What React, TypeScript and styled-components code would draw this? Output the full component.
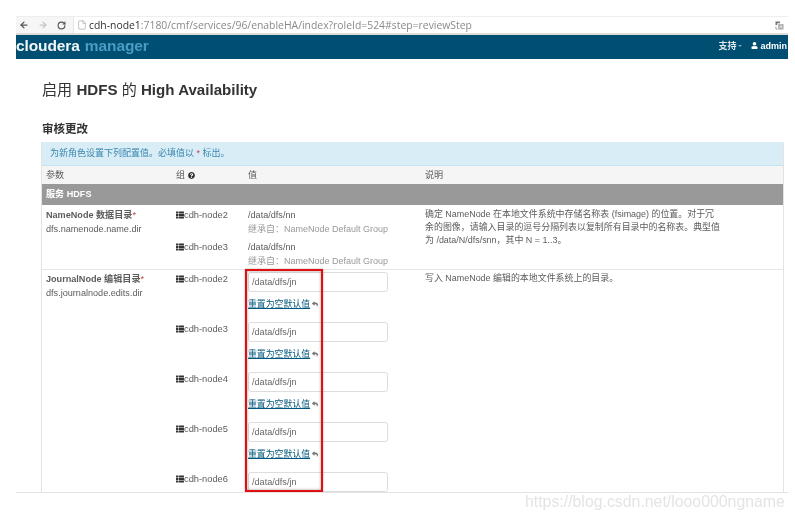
import React from 'react';
import styled, { createGlobalStyle } from 'styled-components';
import { ArrowLeft, ArrowRight, RotateCw, File } from 'lucide-react';
import { FaThList, FaUser, FaQuestionCircle, FaReply } from 'react-icons/fa';

const SANS = '"Liberation Sans", "Noto Sans CJK SC", sans-serif';

const GlobalStyle = createGlobalStyle`
  html, body {
    margin: 0;
    padding: 0;
    background: #fff;
    overflow: hidden;
  }
  * { box-sizing: border-box; }
`;

const defaultGroups = [
  { node: 'cdh-node2', value: '/data/dfs/nn' },
  { node: 'cdh-node3', value: '/data/dfs/nn' },
];
const journalNodes = ['cdh-node2', 'cdh-node3', 'cdh-node4', 'cdh-node5', 'cdh-node6'];

const App: React.FC = () => (
  <Page>
    <GlobalStyle />
    <Toolbar>
      <NavIcons>
        <ArrowLeft size={10} strokeWidth={3} color="#555" />
        <ArrowRight size={10} strokeWidth={3} color="#c4c4c4" />
        <RotateCw size={9} strokeWidth={3} color="#555" />
      </NavIcons>
      <Address>
        <File size={10} strokeWidth={1.4} color="#999" />
        <Url><Host>cdh-node1</Host>:7180/cmf/services/96/enableHA/index?roleId=524#step=reviewStep</Url>
        <Translate viewBox="0 0 10 10">
          <path d="M0.5 0.5h5v2h-3v2h-2z" fill="#777" />
          <rect x="3.5" y="3.5" width="6" height="6" fill="#aaa" />
          <path d="M5.2 8L6.5 5h.3L8 8" stroke="#fff" strokeWidth="0.7" fill="none" />
          <path d="M1 6v3h2" stroke="#888" strokeWidth="0.8" fill="none" />
        </Translate>
      </Address>
    </Toolbar>
    <Header>
      <Logo>cloudera<LogoMark>manager</LogoMark></Logo>
      <HeaderRight>
        <Support>支持<Caret /></Support>
        <UserName><FaUser size={7} />admin</UserName>
      </HeaderRight>
    </Header>
    <Main>
      <Title>启用 <b>HDFS</b> 的 <b>High Availability</b></Title>
      <Subtitle>审核更改</Subtitle>
      <Table>
        <Alert>为新角色设置下列配置值。必填值以 <Star>*</Star> 标出。</Alert>
        <HeadRow>
          <Cell>参数</Cell>
          <Cell>组 <FaQuestionCircle size={7} color="#333" /></Cell>
          <Cell>值</Cell>
          <Cell>说明</Cell>
        </HeadRow>
        <ServiceRow>服务 HDFS</ServiceRow>

        <ParamRow>
          <ParamName $top={3}>
            <strong>NameNode 数据目录</strong><Star>*</Star>
            <br />dfs.namenode.name.dir
          </ParamName>
          <Entries>
            {defaultGroups.map((g, i) => (
              <ReadOnlyEntry key={i}>
                <NodeLabel><FaThList size={8} color="#333" />{g.node}</NodeLabel>
                <div>
                  {g.value}
                  <Inherited>继承自：NameNode Default Group</Inherited>
                </div>
              </ReadOnlyEntry>
            ))}
          </Entries>
          <Description $top={3}>
            确定 NameNode 在本地文件系统中存储名称表 (fsimage) 的位置。对于冗<br />
            余的图像，请输入目录的逗号分隔列表以复制所有目录中的名称表。典型值<br />
            为 /data/N/dfs/snn，其中 N = 1..3。
          </Description>
        </ParamRow>

        <ParamRow>
          <ParamName $top={2}>
            <strong>JournalNode 编辑目录</strong><Star>*</Star>
            <br />dfs.journalnode.edits.dir
          </ParamName>
          <Entries>
            {journalNodes.map((node, i) => (
              <EditEntry key={node}>
                <NodeLabel><FaThList size={8} color="#333" />{node}</NodeLabel>
                <div>
                  <PathInput readOnly value="/data/dfs/jn" />
                  {i < journalNodes.length - 1 && (
                    <ResetLine>
                      <ResetLink>重置为空默认值</ResetLink>
                      <FaReply size={6} color="#777" />
                    </ResetLine>
                  )}
                </div>
              </EditEntry>
            ))}
          </Entries>
          <Description $top={2}>写入 NameNode 编辑的本地文件系统上的目录。</Description>
          <Highlight />
        </ParamRow>
      </Table>
    </Main>
    <Watermark>https://blog.csdn.net/looo000ngname</Watermark>
  </Page>
);

export default App;

const Page = styled.div`
  position: relative;
  width: 795px;
  height: 520px;
  padding: 16px 7px 0 16px;
  overflow: hidden;
  font-family: ${SANS};
  font-size: 9.1px;
  color: #5c5c5c;
  filter: blur(0.4px);
`;

const Toolbar = styled.div`
  display: flex;
  align-items: center;
  height: 19px;
  background: #f6f6f6;
  border-top: 1px solid #eee;
  border-bottom: 2px solid #ddd;
`;

const NavIcons = styled.div`
  display: flex;
  align-items: center;
  gap: 9px;
  width: 57px;
  padding-left: 3px;
`;

const Address = styled.div`
  flex: 1;
  display: flex;
  align-items: center;
  height: 16px;
  background: #fff;
  border-left: 1px solid #e6e6e6;
  padding: 0 4px 0 3px;
  gap: 2px;
`;

const Url = styled.span`
  flex: 1;
  font-family: "Open Sans", sans-serif;
  font-size: 10.4px;
  color: #8a8a8a;
  white-space: nowrap;
`;

const Host = styled.span`
  color: #333;
`;

const Translate = styled.svg`
  width: 9px;
  height: 9px;
`;

const Header = styled.div`
  display: flex;
  align-items: center;
  justify-content: space-between;
  height: 24px;
  background: #004f73;
  color: #fff;
`;

const Logo = styled.div`
  font-size: 15.5px;
  font-weight: 700;
  letter-spacing: -0.1px;
  color: #f2f6f8;
  margin-top: -3px;
`;

const LogoMark = styled.span`
  color: #4a9cc4;
  margin-left: 5px;
`;

const HeaderRight = styled.div`
  display: flex;
  align-items: center;
  gap: 9px;
  margin-top: -3px;
  font-size: 9px;
  font-weight: 700;
  padding-right: 1px;
`;

const Support = styled.span`
  display: flex;
  align-items: center;
  gap: 2px;
  color: #dfe9ee;
`;

const Caret = styled.i`
  width: 0;
  height: 0;
  border: 2px solid transparent;
  border-top-color: #7fa5b8;
  border-bottom: 0;
`;

const UserName = styled.span`
  display: flex;
  align-items: center;
  gap: 2px;
`;

const Main = styled.div`
  height: 434px;
  padding: 0 4px 0 25px;
  overflow: hidden;
  border-bottom: 1px solid #e3e3e3;
`;

const Title = styled.h1`
  margin: 0;
  padding: 22px 0 0 1px;
  height: 63px;
  font-size: 15.1px;
  line-height: 18px;
  font-weight: 400;
  color: #333;
  b { font-weight: 700; }
`;

const Subtitle = styled.h2`
  margin: 0;
  padding-left: 1px;
  height: 20px;
  font-size: 11.5px;
  line-height: 14px;
  font-weight: 700;
  color: #333;
`;

const Table = styled.div`
  width: 743px;
  border-left: 1px solid #e3e3e3;
  border-right: 1px solid #e3e3e3;
`;

const Alert = styled.div`
  height: 24px;
  padding: 0 8px;
  font-size: 9px;
  line-height: 23px;
  background: #d9edf7;
  border-bottom: 1px solid #c4e3f0;
  color: #3a87ad;
`;

const Star = styled.span`
  color: #b94a48;
`;

const HeadRow = styled.div`
  display: grid;
  grid-template-columns: 130px 72px 177px 1fr;
  height: 18px;
  background: #f5f5f5;
  line-height: 18px;
`;

const Cell = styled.div`
  padding-left: 4px;
  svg { vertical-align: -1px; }
`;

const ServiceRow = styled.div`
  height: 21px;
  padding-left: 4px;
  background: #999;
  color: #fff;
  font-weight: 700;
  line-height: 21px;
`;

const ParamRow = styled.div`
  position: relative;
  display: grid;
  grid-template-columns: 134px 245px 1fr;
  border-bottom: 1px solid #e6e6e6;
  line-height: 14px;
`;

const ParamName = styled.div<{ $top: number }>`
  padding: ${p => p.$top}px 0 0 4px;
  strong { font-weight: 700; }
`;

const Entries = styled.div`
  display: flex;
  flex-direction: column;
`;

const ReadOnlyEntry = styled.div`
  display: grid;
  grid-template-columns: 72px 1fr;
  height: 32px;
  padding-top: 3px;
`;

const EditEntry = styled.div`
  display: grid;
  grid-template-columns: 72px 1fr;
  height: 50px;
  padding-top: 2px;
`;

const NodeLabel = styled.div`
  display: flex;
  align-items: flex-start;
  height: 14px;
  font-size: 9.3px;
  line-height: 14px;
  svg { margin-top: 3px; }
`;

const Inherited = styled.div`
  color: #999;
  font-size: 9px;
`;

const Description = styled.div<{ $top: number }>`
  padding: ${p => p.$top}px 0 0 4px;
  font-size: 8.95px;
  line-height: 13px;
`;

const PathInput = styled.input`
  display: block;
  width: 140px;
  height: 20px;
  padding: 0 3px;
  border: 1px solid #ddd;
  border-radius: 3px;
  background: #fff;
  outline: none;
  font-family: ${SANS};
  font-size: 9.1px;
  color: #666;
`;

const ResetLine = styled.div`
  display: flex;
  align-items: center;
  gap: 2px;
  height: 14px;
  margin-top: 5px;
`;

const ResetLink = styled.a`
  font-size: 8.9px;
  color: #00577d;
  text-decoration: underline;
`;

const Highlight = styled.div`
  position: absolute;
  top: -1px;
  left: 203px;
  width: 78px;
  height: 223px;
  border: 2.5px solid #e00f12;
  box-shadow: inset 0 0 3px rgba(90, 60, 60, 0.5), 0 0 2px rgba(90, 60, 60, 0.4);
  pointer-events: none;
`;

const Watermark = styled.div`
  position: absolute;
  left: 525px;
  top: 492px;
  font-size: 15.85px;
  line-height: 19px;
  color: #e4e4e4;
  white-space: nowrap;
`;
